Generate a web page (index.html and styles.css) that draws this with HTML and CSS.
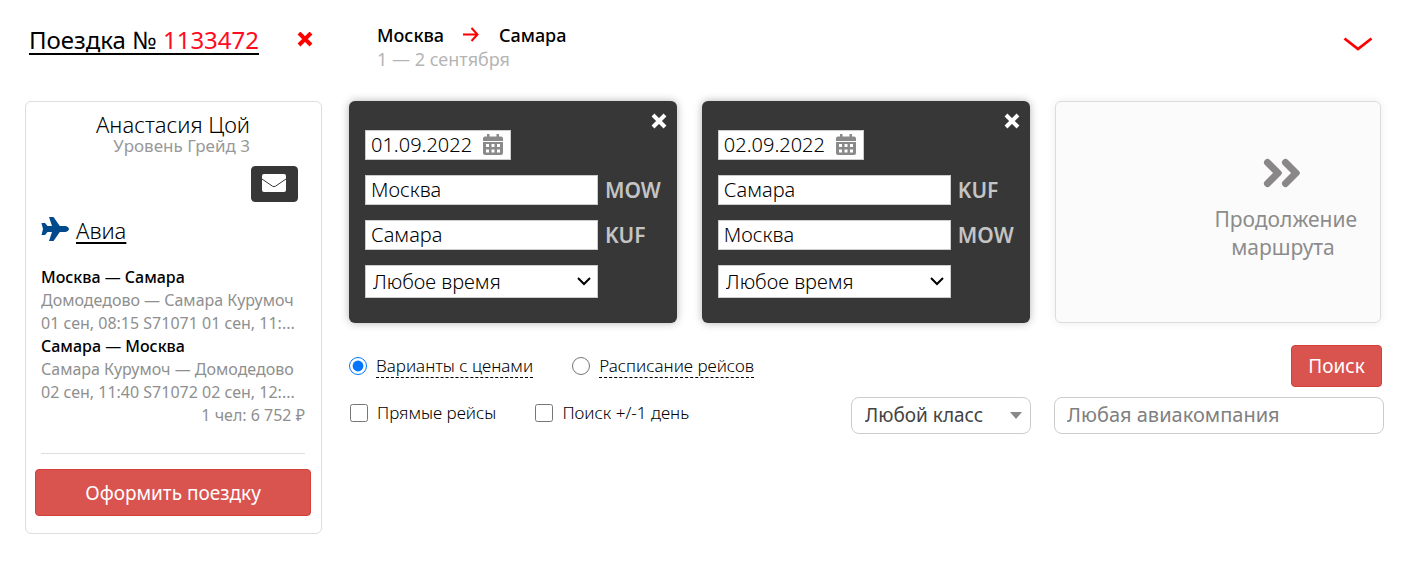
FILE: index.html
```html
<!DOCTYPE html>
<html lang="ru">
<head>
	<meta charset="UTF-8">
	<meta name="viewport" content="width=device-width, initial-scale=1.0">
	<title>Поездка № 1133472</title>
	<link rel="stylesheet" href="styles.css">
</head>
<body>

	<!-- HEADER -->
	<header class="header">
		<div class="trip">
			<a href="#" class="trip-link">Поездка № <span>1133472</span></a>
			<button type="button" class="icon-btn" aria-label="Удалить поездку">
				<svg width="16" height="16" viewBox="0 0 16 16"><path d="M2 1l12 12M14 1L2 13" stroke="#f00" stroke-width="4"/></svg>
			</button>
		</div>
		<div class="route">
			<div class="route-cities">
				<span>Москва</span>
				<svg width="17" height="16" viewBox="0 0 17 16"><path d="M0 7.500h15M8.500 1l6 6.500-6 6.500" fill="none" stroke="#f00" stroke-width="2"/></svg>
				<span>Самара</span>
			</div>
			<div class="route-dates">1 — 2 сентября</div>
		</div>
		<button type="button" class="icon-btn toggle" aria-label="Развернуть">
			<svg width="30" height="16" viewBox="0 0 30 16"><path d="M1.500 2.500L15 13 28.500 2.500" fill="none" stroke="#f00" stroke-width="2.800"/></svg>
		</button>
	</header>

	<div class="page">

		<!-- TRIP CARD -->
		<aside class="sidebar">
			<div class="person">
				<div class="person-name">Анастасия Цой</div>
				<div class="person-grade">Уровень Грейд 3</div>
			</div>
			<button type="button" class="mail-btn" aria-label="Написать">
				<svg width="24" height="18" viewBox="0 0 24 18"><rect width="24" height="18" rx="2" fill="#fff"/><path d="M0 5l10.500 7.200q1.500 1 3 0L24 5" fill="none" stroke="#373737" stroke-width="1"/></svg>
			</button>
			<div class="avia">
				<svg width="28" height="26" viewBox="0 0 28 26"><path d="M8 0h4.500l6.300 9H24c2 0 4 1.500 4 3s-2 3-4 3h-5.200l-6.300 9H8l3-9H6.500L4 18H.5L2 12 .5 6H4l2.500 3H11z" fill="#004a8b"/></svg>
				<a href="#">Авиа</a>
			</div>
			<div class="flights">
				<p class="flight-title">Москва — Самара</p>
				<p>Домодедово — Самара Курумоч</p>
				<p>01 сен, 08:15 S71071 01 сен, 11:...</p>
				<p class="flight-title">Самара — Москва</p>
				<p>Самара Курумоч — Домодедово</p>
				<p>02 сен, 11:40 S71072 02 сен, 12:...</p>
				<p class="price">1 чел: 6 752 ₽</p>
			</div>
			<button type="button" class="btn btn-order">Оформить поездку</button>
		</aside>

		<!-- SEARCH FORM -->
		<form class="search">
			<div class="segments">
				<div class="segment">
					<button type="button" class="icon-btn segment-close" aria-label="Удалить">
						<svg width="16" height="16" viewBox="0 0 16 16"><path d="M2 2l12 12M14 2L2 14" stroke="#fff" stroke-width="4"/></svg>
					</button>
					<div class="date-field">
						<input type="text" value="01.09.2022" aria-label="Дата">
						<svg width="20" height="22" viewBox="0 0 20 22"><path fill="#8a8a8a" fill-rule="evenodd" d="M4 0h2.500v2.500h7V0H16v2.500h2a2 2 0 0 1 2 2V7H0V4.500a2 2 0 0 1 2-2h2zM0 8h20V19a2 2 0 0 1-2 2H2a2 2 0 0 1-2-2zM3 10v3h3v-3zM8.500 10v3h3v-3zM14 10v3h3v-3zM3 15.500v3h3v-3zM8.500 15.500v3h3v-3zM14 15.500v3h3v-3z"/></svg>
					</div>
					<div class="city-field">
						<input type="text" value="Москва" aria-label="Откуда">
						<span>MOW</span>
					</div>
					<div class="city-field">
						<input type="text" value="Самара" aria-label="Куда">
						<span>KUF</span>
					</div>
					<select class="time-select" aria-label="Время">
						<option>Любое время</option>
					</select>
				</div>

				<div class="segment">
					<button type="button" class="icon-btn segment-close" aria-label="Удалить">
						<svg width="16" height="16" viewBox="0 0 16 16"><path d="M2 2l12 12M14 2L2 14" stroke="#fff" stroke-width="4"/></svg>
					</button>
					<div class="date-field">
						<input type="text" value="02.09.2022" aria-label="Дата">
						<svg width="20" height="22" viewBox="0 0 20 22"><path fill="#8a8a8a" fill-rule="evenodd" d="M4 0h2.500v2.500h7V0H16v2.500h2a2 2 0 0 1 2 2V7H0V4.500a2 2 0 0 1 2-2h2zM0 8h20V19a2 2 0 0 1-2 2H2a2 2 0 0 1-2-2zM3 10v3h3v-3zM8.500 10v3h3v-3zM14 10v3h3v-3zM3 15.500v3h3v-3zM8.500 15.500v3h3v-3zM14 15.500v3h3v-3z"/></svg>
					</div>
					<div class="city-field">
						<input type="text" value="Самара" aria-label="Откуда">
						<span>KUF</span>
					</div>
					<div class="city-field">
						<input type="text" value="Москва" aria-label="Куда">
						<span>MOW</span>
					</div>
					<select class="time-select" aria-label="Время">
						<option>Любое время</option>
					</select>
				</div>

				<button type="button" class="next-segment">
					<svg width="38" height="30" viewBox="0 0 38 30"><path d="M4.500 4.500L15 15 4.500 25.500M22.500 4.500L33 15 22.500 25.500" fill="none" stroke="#8a8788" stroke-width="6"/><path d="M4.500 4.500L15 15 4.500 25.500M22.500 4.500L33 15 22.500 25.500" fill="none" stroke="#8a8788" stroke-width="7" stroke-linecap="round" stroke-linejoin="round"/></svg>
					<span>Продолжение<br>маршрута&nbsp;</span>
				</button>
			</div>

			<div class="options">
				<div class="modes">
					<label class="mode"><input type="radio" name="mode" checked><span>Варианты с ценами</span></label>
					<label class="mode"><input type="radio" name="mode"><span>Расписание рейсов</span></label>
				</div>
				<button type="submit" class="btn btn-search">Поиск</button>
			</div>

			<div class="filters">
				<div class="checks">
					<label><input type="checkbox">Прямые рейсы</label>
					<label><input type="checkbox">Поиск +/-1 день</label>
				</div>
				<select class="class-select" aria-label="Класс">
					<option>Любой класс</option>
				</select>
				<input type="text" class="airline" placeholder="Любая авиакомпания" aria-label="Авиакомпания">
			</div>
		</form>
	</div>

</body>
</html>
```
FILE: styles.css
```css
* {
	margin: 0;
	padding: 0;
	box-sizing: border-box;
}

body {
	background: #fff;
	color: #000;
	font-family: "Noto Sans", "Open Sans", sans-serif;
	font-size: 16px;
}

button, input, select {
	font-family: inherit;
}

svg {
	display: block;
}

.icon-btn {
	background: none;
	border: none;
	cursor: pointer;
}

/* HEADER */
.header {
	display: flex;
	align-items: flex-start;
	height: 101px;
	padding: 22px 41px 0 29px;
}

.trip {
	display: flex;
	align-items: center;
	gap: 38px;
	width: 348px;
}

.trip-link {
	color: #000;
	font-size: 24px;
	line-height: 36px;
	text-decoration-thickness: 2px;
	text-underline-offset: 4px;
}

.trip-link span {
	color: #ff0a1e;
}

.route-cities {
	display: flex;
	align-items: center;
	gap: 19px;
	font-size: 18px;
	line-height: 26px;
	font-weight: 500;
}

.route-dates {
	color: #b5b5b5;
	font-size: 18px;
	line-height: 22px;
}

.toggle {
	margin: 14px 0 0 auto;
}

.page {
	display: grid;
	grid-template-columns: 297px 1fr;
	gap: 27px;
	align-items: start;
	padding: 0 30px 50px 25px;
}

/* TRIP CARD */
.sidebar {
	display: flex;
	flex-direction: column;
	padding: 9px 10px 17px 9px;
	border: 1px solid #ddd;
	border-radius: 6px;
}

.person {
	align-self: center;
	text-align: right;
}

.person-name {
	font-size: 22px;
	line-height: 26px;
	font-weight: 300;
}

.person-grade {
	color: #999;
	font-size: 17px;
	line-height: 18px;
}

.mail-btn {
	align-self: flex-end;
	margin: 11px 13px 0 0;
	padding: 7px 11px 9px 10px;
	background: #373737;
	border: 1px solid #373737;
	border-radius: 4px;
	cursor: pointer;
}

.avia {
	display: flex;
	align-items: center;
	gap: 7px;
	margin: 12px 6px 20px;
}

.avia a {
	color: #000;
	font-size: 22px;
	line-height: 32px;
	font-weight: 300;
	text-decoration-thickness: 2px;
	text-underline-offset: 3px;
}

.flights {
	margin: 0 6px;
	padding-bottom: 26px;
	border-bottom: 1px solid #ddd;
	color: #8f8f8f;
	font-size: 16px;
	line-height: 23px;
}

.flights p {
	overflow: hidden;
	white-space: nowrap;
	text-overflow: ellipsis;
}

.flights .flight-title {
	color: #000;
	font-weight: 500;
}

.flights .price {
	text-align: right;
}

.btn {
	background: #d9534f;
	border: 1px solid #d43f3a;
	border-radius: 4px;
	color: #fff;
	font-size: 19px;
	cursor: pointer;
}

.btn-order {
	height: 47px;
	margin-top: 15px;
}

/* SEARCH FORM */
.segments {
	display: grid;
	grid-template-columns: repeat(3, 1fr);
	gap: 25px;
	padding-right: 3px;
}

.segment {
	position: relative;
	display: flex;
	flex-direction: column;
	align-items: flex-start;
	gap: 15px;
	padding: 29px 16px 25px;
	background: #373737;
	border-radius: 6px;
	box-shadow: 0 0 8px rgba(0, 0, 0, 0.3);
}

.segment-close {
	position: absolute;
	top: 12px;
	right: 10px;
}

.segment input,
.time-select {
	height: 30px;
	padding: 0 5px 2px;
	background: #fff;
	border: 1px solid #ccc;
	color: #000;
	font-size: 20px;
	font-weight: 300;
}

.date-field {
	position: relative;
}

.date-field input {
	display: block;
	width: 146px;
}

/* calendar icon lies over the date input */
.date-field svg {
	position: absolute;
	top: 4px;
	right: 8px;
}

.city-field {
	display: flex;
	align-items: center;
	gap: 7px;
}

.city-field input {
	width: 233px;
}

.city-field span {
	color: #c4c4c4;
	font-size: 21px;
	line-height: 30px;
	font-weight: 600;
}

.segment .time-select {
	width: 233px;
	height: 33px;
	padding: 0 7px;
	appearance: none;
	background: #fff url("data:image/svg+xml,%3Csvg xmlns='http://www.w3.org/2000/svg' width='14' height='9'%3E%3Cpath d='M1 1l6 6 6-6' fill='none' stroke='%23000' stroke-width='2'/%3E%3C/svg%3E") no-repeat right 6px center;
}

.next-segment {
	display: flex;
	flex-direction: column;
	align-items: flex-end;
	justify-content: center;
	gap: 17px;
	padding: 0 23px 5px;
	background: #fbfbfb;
	border: 1px solid #ddd;
	border-radius: 6px;
	box-shadow: 0 0 8px rgba(0, 0, 0, 0.08);
	color: #8c8c8c;
	font-size: 21px;
	line-height: 28px;
	cursor: pointer;
}

.next-segment svg {
	margin-right: 56px;
}

.options {
	display: flex;
	justify-content: space-between;
	align-items: center;
	margin-top: 22px;
	padding-right: 2px;
}

.modes,
.checks {
	display: flex;
	gap: 39px;
	font-size: 17px;
	line-height: 22px;
	font-weight: 300;
}

.mode,
.checks label {
	display: flex;
	align-items: center;
	gap: 9px;
}

.mode input,
.checks input {
	width: 18px;
	height: 18px;
}

.mode span {
	border-bottom: 1px dashed #000;
}

.btn-search {
	width: 91px;
	height: 42px;
}

.filters {
	display: flex;
	align-items: center;
	margin-top: 10px;
}

.checks {
	margin: 0 auto 5px 1px;
}

.class-select,
.airline {
	height: 37px;
	background: #fff;
	border: 1px solid #ccc;
	border-radius: 8px;
}

.class-select {
	width: 180px;
	margin-right: 23px;
	padding: 0 13px 2px;
	appearance: none;
	background: #fff url("data:image/svg+xml,%3Csvg xmlns='http://www.w3.org/2000/svg' width='12' height='7'%3E%3Cpath d='M0 0h12L6 7z' fill='%23888'/%3E%3C/svg%3E") no-repeat right 8px center;
	color: #444;
	font-size: 19px;
}

.airline {
	width: 330px;
	padding: 0 12px 2px;
	font-size: 20px;
}

.airline::placeholder {
	color: #808080;
}
```
